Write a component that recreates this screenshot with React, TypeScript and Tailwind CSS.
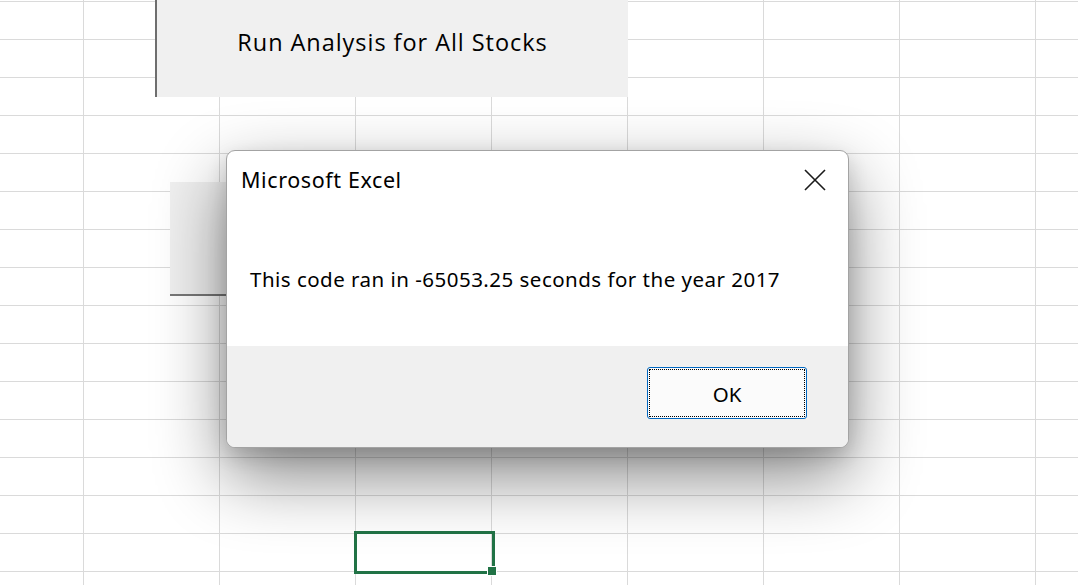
import React from "react";

const COLS = [84, 136, 136, 136, 136, 136, 136, 136, 136];
const ROWS = [2, ...Array(16).fill(38)];

export default function App() {
  return (
    <div className="relative w-[1078px] h-[585px] overflow-hidden bg-white" style={{ fontFamily: '"Open Sans", "Noto Sans", sans-serif' }}>
      {/* sheet grid */}
      <div
        className="grid"
        style={{
          gridTemplateColumns: COLS.map((c) => `${c}px`).join(" "),
          gridTemplateRows: ROWS.map((r) => `${r}px`).join(" "),
        }}
      >
        {ROWS.map((_, r) =>
          COLS.map((_, c) => (
            <div key={`${r}-${c}`} className="border-r border-b border-[#dadada]" />
          ))
        )}
      </div>

      {/* form button 1 */}
      <div className="absolute left-[155px] top-0 w-[473px] h-[97px] bg-[#f0f0f0] border-l-2 border-[#6e6e6e] flex items-center justify-center">
        <span className="text-[23.5px] text-black tracking-[0.95px] -mt-[12px]">Run Analysis for All Stocks</span>
      </div>

      {/* form button 2 (behind dialog) */}
      <div className="absolute left-[170px] top-[182px] w-[473px] h-[114px] bg-[#f0f0f0] border-b-2 border-[#777777]" />

      {/* selected cell */}
      <div className="absolute left-[354px] top-[531px] w-[141px] h-[43px] border-[3px] border-[#217346]" />
      <div className="absolute left-[488px] top-[567px] w-[8px] h-[8px] bg-[#217346] outline outline-1 outline-white" />

      {/* dialog */}
      <div className="absolute left-[226px] top-[150px] w-[623px] h-[298px] rounded-[9px] border border-[#a3a3a3] bg-white overflow-hidden flex flex-col shadow-[0_28px_70px_rgba(0,0,0,0.48),0_8px_20px_rgba(0,0,0,0.14)]" style={{ fontFamily: '"Noto Sans", "Open Sans", sans-serif' }}>
        <div className="flex-1 flex flex-col">
          <div className="flex items-start justify-between h-[60px]">
            <span className="ml-[14px] mt-[14px] text-[21.5px] leading-[30px] tracking-[0.6px] text-black">Microsoft Excel</span>
            <svg className="mr-[22px] mt-[18px]" width="22" height="22" viewBox="0 0 22 22">
              <path d="M1 1 L21 21 M21 1 L1 21" stroke="#1a1a1a" strokeWidth="1.6" fill="none" />
            </svg>
          </div>
          <div className="ml-[23px] mt-[54px] text-[20.5px] leading-[28px] tracking-[0.48px] text-black">
            This code ran in -65053.25 seconds for the year 2017
          </div>
        </div>
        <div className="h-[101px] bg-[#f0f0f0] flex items-start justify-end">
          <button className="mt-[21px] mr-[41px] w-[160px] h-[52px] rounded-[3px] border border-[#0067c0] bg-[#fbfbfb] p-[1px] box-border">
            <div className="w-full h-full border border-dotted border-black flex items-center justify-center text-[20.5px] text-black pt-[3px]">
              OK
            </div>
          </button>
        </div>
      </div>
    </div>
  );
}
